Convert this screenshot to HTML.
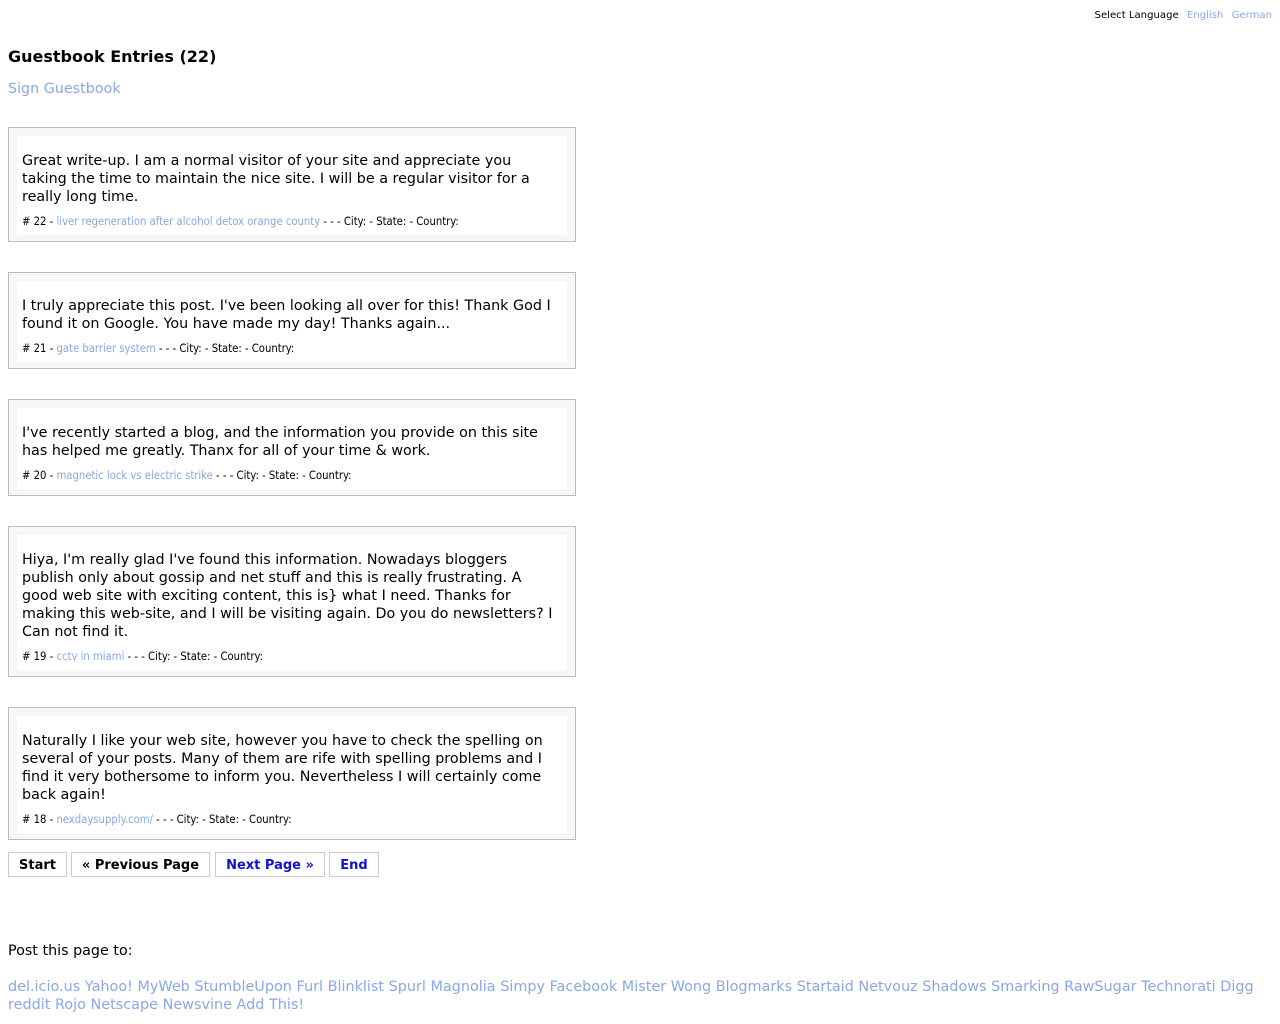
<!DOCTYPE html>
<html><head><meta charset="utf-8"><style>
body{margin:0;font-family:"DejaVu Sans","Liberation Sans",sans-serif;color:#000;background:#fff}
a{color:#88a8e8;text-decoration:none}
.lang{position:absolute;right:8px;top:10px;font-size:10.1px}
.lang a{margin-left:5px}
h1{position:absolute;left:8px;top:47px;margin:0;font-size:16px;font-weight:bold}
.sign{position:absolute;left:8px;top:81px;font-size:14.3px}
.box{position:absolute;left:8px;width:566px;border:1px solid #bbb;background:#f7f7f7}
.inner{margin:8px 8px 6px 8px;background:#fff;padding:16px 9px 6px 5px;font-size:14.3px;line-height:18px}
.meta{font-family:"DejaVu Sans Condensed","DejaVu Sans",sans-serif;font-stretch:condensed;font-size:11.2px;line-height:14px;margin-top:9px}
.btns{position:absolute;left:8px;top:853px;font-size:13px;font-weight:bold}
.btns span{position:absolute;top:-1px;line-height:25px;border:1px solid #ccc;text-align:center;box-sizing:border-box;height:25px}
.blue{color:#1111cc}
.post{position:absolute;left:8px;top:943px;font-size:14.3px}
.links{position:absolute;left:8px;top:978px;width:1265px;font-size:14.4px;line-height:18px}
</style></head><body>
<div class="lang">Select Language <a>English</a> <a>German</a></div>
<h1>Guestbook Entries (22)</h1>
<a class="sign">Sign Guestbook</a>

<div class="box" style="top:127px"><div class="inner">Great write-up. I am a normal visitor of your site and appreciate you taking the time to maintain the nice site. I will be a regular visitor for a really long time.<div class="meta"># 22 - <a>liver regeneration after alcohol detox orange county</a> - - - City: - State: - Country:</div></div></div>

<div class="box" style="top:272px"><div class="inner">I truly appreciate this post. I've been looking all over for this! Thank God I found it on Google. You have made my day! Thanks again...<div class="meta"># 21 - <a>gate barrier system</a> - - - City: - State: - Country:</div></div></div>

<div class="box" style="top:399px"><div class="inner">I've recently started a blog, and the information you provide on this site has helped me greatly. Thanx for all of your time &amp; work.<div class="meta"># 20 - <a>magnetic lock vs electric strike</a> - - - City: - State: - Country:</div></div></div>

<div class="box" style="top:526px"><div class="inner">Hiya, I'm really glad I've found this information. Nowadays bloggers publish only about gossip and net stuff and this is really frustrating. A good web site with exciting content, this is} what I need. Thanks for making this web-site, and I will be visiting again. Do you do newsletters? I Can not find it.<div class="meta"># 19 - <a>cctv in miami</a> - - - City: - State: - Country:</div></div></div>

<div class="box" style="top:707px"><div class="inner">Naturally I like your web site, however you have to check the spelling on several of your posts. Many of them are rife with spelling problems and I find it very bothersome to inform you. Nevertheless I will certainly come back again!<div class="meta"># 18 - <a>nexdaysupply.com/</a> - - - City: - State: - Country:</div></div></div>

<div class="btns">
<span style="left:0;width:59px">Start</span>
<span style="left:63px;width:139px">« Previous Page</span>
<span class="blue" style="left:207px;width:110px">Next Page »</span>
<span class="blue" style="left:321px;width:50px">End</span>
</div>

<div class="post">Post this page to:</div>
<div class="links"><a>del.icio.us</a> <a>Yahoo! MyWeb</a> <a>StumbleUpon</a> <a>Furl</a> <a>Blinklist</a> <a>Spurl</a> <a>Magnolia</a> <a>Simpy</a> <a>Facebook</a> <a>Mister Wong</a> <a>Blogmarks</a> <a>Startaid</a> <a>Netvouz</a> <a>Shadows</a> <a>Smarking</a> <a>RawSugar</a> <a>Technorati</a> <a>Digg</a> <a>reddit</a> <a>Rojo</a> <a>Netscape</a> <a>Newsvine</a> <a>Add This!</a></div>
</body></html>
